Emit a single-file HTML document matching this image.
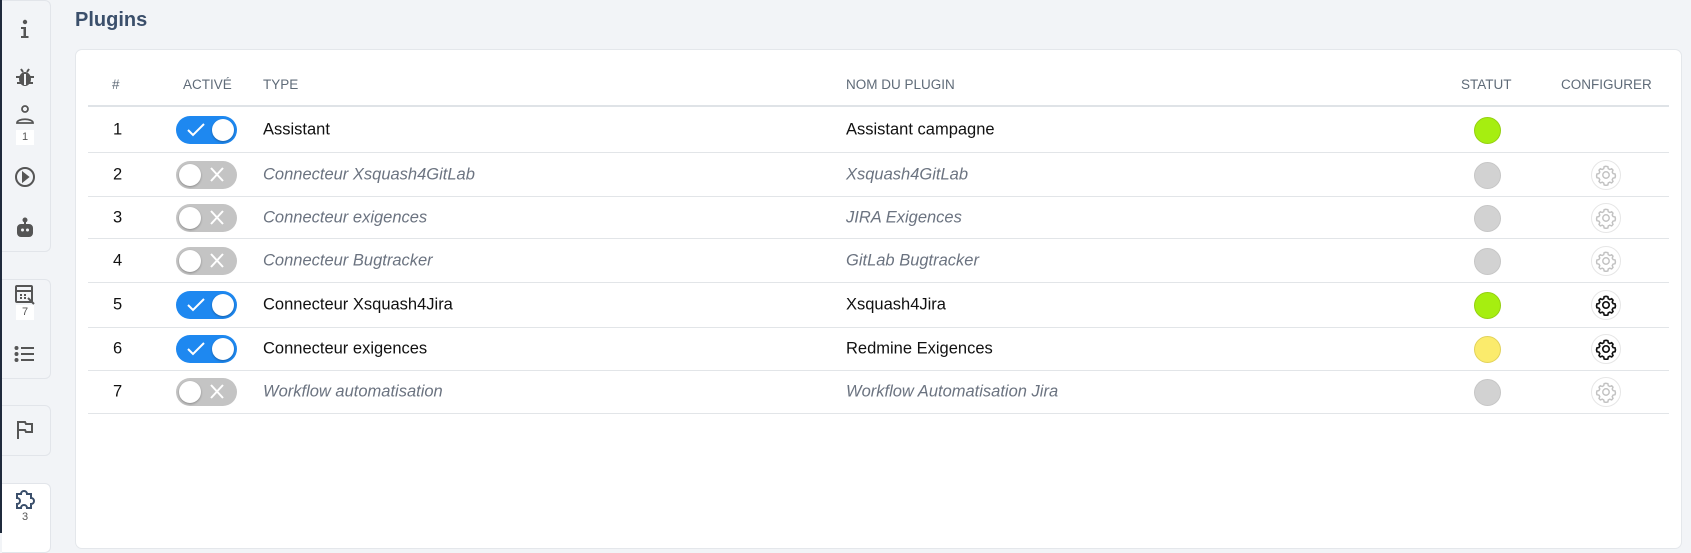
<!DOCTYPE html>
<html><head><meta charset="utf-8"><style>
*{box-sizing:border-box;margin:0;padding:0}
body{width:1691px;height:533px;overflow:hidden;background:#f2f4f7;font-family:"Liberation Sans",sans-serif;position:relative}
.edge{position:absolute;left:0;top:0;width:2px;height:533px;background:#1f2a3c}
.grp{position:absolute;left:2px;width:49px;background:#f2f4f7;border:1px solid #e2e5ea;border-left:none;border-radius:0 6px 6px 0}
.ic{position:absolute;left:13px;width:24px;height:24px}
.badge{position:absolute;left:16px;width:18px;height:15px;background:#fff;font-size:11px;color:#555;text-align:center;line-height:15px}
h1{position:absolute;left:75px;top:9px;font-size:20px;font-weight:bold;color:#3b4f6b}
.card{position:absolute;left:75px;top:49px;width:1607px;height:500px;background:#fff;border:1px solid #e4e7eb;border-radius:7px}
.th{position:absolute;top:77px;font-size:13.5px;color:#5f6b78}
.hline{position:absolute;left:88px;width:1581px;top:105px;height:2px;background:#dfe3e7}
.row{position:absolute;left:88px;width:1581px;border-bottom:1px solid #e2e5e8}
.row span{position:absolute;top:50%;transform:translateY(-50%);font-size:16.5px;color:#111;white-space:nowrap}
.row.off span.t{color:#6b7380;font-style:italic}
.num{left:25px}
.tg{position:absolute;left:88px;top:50%;margin-top:-14px;width:61px;height:28px;border-radius:14px}
.tg.on{background:#1e88f0}
.tg.off{background:#c4c4c4}
.knob{position:absolute;top:3px;width:22px;height:22px;border-radius:50%;background:#fff;box-shadow:0 1px 2px rgba(0,0,0,.3)}
.on .knob{right:3px}.off .knob{left:3px}
.dot{position:absolute;left:1386px;top:50%;margin-top:-13px;width:27px;height:27px;border-radius:50%}
.g{background:#a6ee10;border:1px solid #94d010}.y{background:#fbeb6c;border:1px solid #e2d25a}.n{background:#d2d2d2;border:1px solid #c6c6c6}
.gear{position:absolute;left:1503px;top:50%;margin-top:-15px;width:30px;height:30px;border-radius:50%;border:1px solid #e6e6e6;background:#fff}
.gear svg{position:absolute;left:3px;top:3px}
</style></head><body>
<svg width="0" height="0" style="position:absolute"><defs><path id="gp" d="M12 2.5l2 .4.5 2.2 1.6.9 2.1-.8 1.4 1.5-.8 2.1.9 1.6 2.2.5.4 2-.4 2-2.2.5-.9 1.6.8 2.1-1.4 1.5-2.1-.8-1.6.9-.5 2.2-2 .4-2-.4-.5-2.2-1.6-.9-2.1.8-1.4-1.5.8-2.1-.9-1.6-2.2-.5-.4-2 .4-2 2.2-.5.9-1.6-.8-2.1 1.4-1.5 2.1.8 1.6-.9.5-2.2z"/></defs></svg>
<div class="edge"></div>
<div class="grp" style="top:0;height:252px"></div>
<div class="grp" style="top:279px;height:100px"></div>
<div class="grp" style="top:405px;height:51px"></div>
<div class="grp" style="top:483px;height:70px;background:#fff"></div>

<svg class="ic" style="top:17px" viewBox="0 0 24 24"><circle cx="12" cy="5" r="2.2" fill="#555"/><path d="M8 10h5v9h2.5v2h-7.5v-2h2.5v-7h-2.5z" fill="#555"/></svg>
<svg class="ic" style="top:65px" viewBox="0 0 24 24" fill="none" stroke="#555" stroke-width="2"><ellipse cx="12" cy="14" rx="5" ry="6" fill="#555"/><path d="M8 4l2 3M16 4l-2 3M3 12h4M17 12h4M4 18h4M16 18h4" /><path d="M12 9v11" stroke="#f2f4f7"/></svg>
<svg class="ic" style="top:104px" viewBox="0 0 24 24" fill="none" stroke="#555" stroke-width="1.8"><circle cx="12" cy="5" r="3"/><path d="M4 19c0-5 16-5 16 0z"/></svg>
<div class="badge" style="top:130px">1</div>
<svg class="ic" style="top:165px" viewBox="0 0 24 24" fill="none" stroke="#555" stroke-width="2"><circle cx="12" cy="12" r="9"/><path d="M10 8l5 4-5 4z" fill="#555"/></svg>
<svg class="ic" style="top:216px" viewBox="0 0 24 24" fill="none" stroke="#555" stroke-width="2"><circle cx="12" cy="4" r="1.5" fill="#555"/><path d="M12 5v4"/><rect x="5" y="9" width="14" height="11" rx="3" fill="#555"/><circle cx="9.5" cy="14" r="1.5" fill="#f2f4f7" stroke="none"/><circle cx="14.5" cy="14" r="1.5" fill="#f2f4f7" stroke="none"/></svg>
<svg class="ic" style="top:283px" viewBox="0 0 24 24" fill="none" stroke="#555" stroke-width="2"><rect x="3" y="3" width="16" height="16" rx="1"/><path d="M3 8h16M7 12h2M11 12h2M7 15h2M11 15h2M15 15l6 6"/></svg>
<div class="badge" style="top:305px">7</div>
<svg class="ic" style="top:342px" viewBox="0 0 24 24" fill="none" stroke="#555" stroke-width="2"><path d="M8 6h13M8 12h13M8 18h13"/><circle cx="3.5" cy="6" r="1" fill="#555"/><circle cx="3.5" cy="12" r="1" fill="#555"/><circle cx="3.5" cy="18" r="1" fill="#555"/></svg>
<svg class="ic" style="top:418px" viewBox="0 0 24 24" fill="none" stroke="#555" stroke-width="2"><path d="M5 21V4h7l1 2h6v8h-6l-1-2H5"/></svg>
<svg class="ic" style="top:487px" viewBox="0 0 24 24" fill="none" stroke="#3b4f6b" stroke-width="2"><path d="M4 7h4a3 3 0 1 1 6 0h4v4a3 3 0 1 1 0 6v4h-4a3 3 0 1 0-6 0H4v-4a3 3 0 1 0 0-6z"/></svg>
<div class="badge" style="top:510px">3</div>

<h1>Plugins</h1>
<div class="card"></div>
<div class="th" style="left:112px">#</div>
<div class="th" style="left:183px">ACTIVÉ</div>
<div class="th" style="left:263px">TYPE</div>
<div class="th" style="left:846px">NOM DU PLUGIN</div>
<div class="th" style="left:1461px">STATUT</div>
<div class="th" style="left:1561px">CONFIGURER</div>
<div class="hline"></div>

<div class="row" style="top:107px;height:46px"><span class="num">1</span><div class="tg on"><svg style="position:absolute;left:10px;top:6px" width="20" height="15" viewBox="0 0 20 15"><path d="M2 8l5 5L18 2" stroke="#fff" stroke-width="2" fill="none"/></svg><div class="knob"></div></div><span class="t" style="left:175px">Assistant</span><span class="t" style="left:758px">Assistant campagne</span><div class="dot g"></div></div>

<div class="row off" style="top:153px;height:44px"><span class="num">2</span><div class="tg off"><svg style="position:absolute;left:33px;top:6px" width="16" height="15" viewBox="0 0 16 15"><path d="M2 1l12 13M14 1L2 14" stroke="#fff" stroke-width="2"/></svg><div class="knob"></div></div><span class="t" style="left:175px">Connecteur Xsquash4GitLab</span><span class="t" style="left:758px">Xsquash4GitLab</span><div class="dot n"></div><div class="gear"><svg width="22" height="22" viewBox="0 0 24 24" fill="none" stroke="#c2c2c2" stroke-width="1.6"><use href="#gp"/><circle cx="12" cy="12" r="3.5"/></svg></div></div>

<div class="row off" style="top:197px;height:42px"><span class="num">3</span><div class="tg off"><svg style="position:absolute;left:33px;top:6px" width="16" height="15" viewBox="0 0 16 15"><path d="M2 1l12 13M14 1L2 14" stroke="#fff" stroke-width="2"/></svg><div class="knob"></div></div><span class="t" style="left:175px">Connecteur exigences</span><span class="t" style="left:758px">JIRA Exigences</span><div class="dot n"></div><div class="gear"><svg width="22" height="22" viewBox="0 0 24 24" fill="none" stroke="#c2c2c2" stroke-width="1.6"><use href="#gp"/><circle cx="12" cy="12" r="3.5"/></svg></div></div>

<div class="row off" style="top:239px;height:44px"><span class="num">4</span><div class="tg off"><svg style="position:absolute;left:33px;top:6px" width="16" height="15" viewBox="0 0 16 15"><path d="M2 1l12 13M14 1L2 14" stroke="#fff" stroke-width="2"/></svg><div class="knob"></div></div><span class="t" style="left:175px">Connecteur Bugtracker</span><span class="t" style="left:758px">GitLab Bugtracker</span><div class="dot n"></div><div class="gear"><svg width="22" height="22" viewBox="0 0 24 24" fill="none" stroke="#c2c2c2" stroke-width="1.6"><use href="#gp"/><circle cx="12" cy="12" r="3.5"/></svg></div></div>

<div class="row" style="top:283px;height:45px"><span class="num">5</span><div class="tg on"><svg style="position:absolute;left:10px;top:6px" width="20" height="15" viewBox="0 0 20 15"><path d="M2 8l5 5L18 2" stroke="#fff" stroke-width="2" fill="none"/></svg><div class="knob"></div></div><span class="t" style="left:175px">Connecteur Xsquash4Jira</span><span class="t" style="left:758px">Xsquash4Jira</span><div class="dot g"></div><div class="gear"><svg width="22" height="22" viewBox="0 0 24 24" fill="none" stroke="#111" stroke-width="1.8"><use href="#gp"/><circle cx="12" cy="12" r="3.5"/></svg></div></div>

<div class="row" style="top:328px;height:43px"><span class="num">6</span><div class="tg on"><svg style="position:absolute;left:10px;top:6px" width="20" height="15" viewBox="0 0 20 15"><path d="M2 8l5 5L18 2" stroke="#fff" stroke-width="2" fill="none"/></svg><div class="knob"></div></div><span class="t" style="left:175px">Connecteur exigences</span><span class="t" style="left:758px">Redmine Exigences</span><div class="dot y"></div><div class="gear"><svg width="22" height="22" viewBox="0 0 24 24" fill="none" stroke="#111" stroke-width="1.8"><use href="#gp"/><circle cx="12" cy="12" r="3.5"/></svg></div></div>

<div class="row off" style="top:371px;height:43px"><span class="num">7</span><div class="tg off"><svg style="position:absolute;left:33px;top:6px" width="16" height="15" viewBox="0 0 16 15"><path d="M2 1l12 13M14 1L2 14" stroke="#fff" stroke-width="2"/></svg><div class="knob"></div></div><span class="t" style="left:175px">Workflow automatisation</span><span class="t" style="left:758px">Workflow Automatisation Jira</span><div class="dot n"></div><div class="gear"><svg width="22" height="22" viewBox="0 0 24 24" fill="none" stroke="#c2c2c2" stroke-width="1.6"><use href="#gp"/><circle cx="12" cy="12" r="3.5"/></svg></div></div>
</body></html>
